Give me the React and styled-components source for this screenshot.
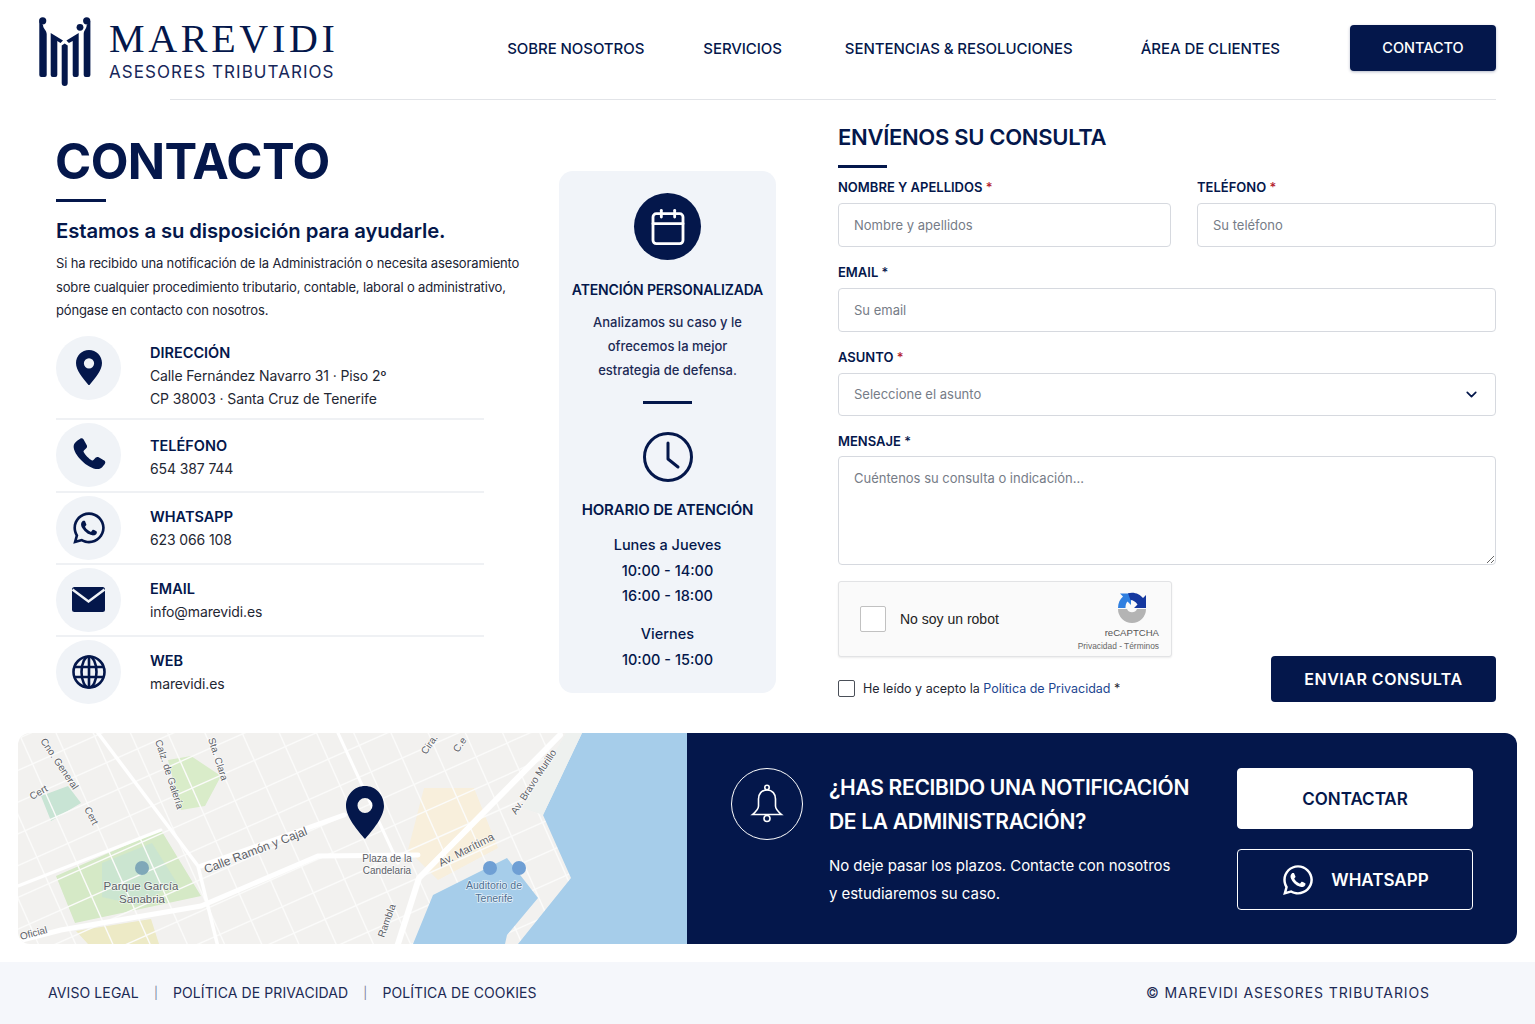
import React from "react";
import styled, { createGlobalStyle } from "styled-components";
import { FaWhatsapp } from "react-icons/fa";
import { Calendar, ChevronDown } from "lucide-react";

const NAVY = "#04174b";
const SANS = `"Inter", "Liberation Sans", sans-serif`;

const Global = createGlobalStyle`
  html, body { margin: 0; padding: 0; background: #fff; }
  body { font-family: ${SANS}; color: #1b2333; }
  * { box-sizing: border-box; }
`;

const Page = styled.div`
  width: 1535px;
  height: 1024px;
  overflow: hidden;
  background: #fff;
`;

const Header = styled.header`
  height: 99px;
  padding: 0 39px 4px 38px;
  display: flex;
  align-items: center;
  justify-content: space-between;
`;
const Logo = styled.div`
  display: flex;
  align-items: center;
  gap: 18px;
  padding-top: 8px;
`;
const LogoText = styled.div`
  display: flex;
  flex-direction: column;
  color: ${NAVY};
`;
const LogoName = styled.span`
  font: 400 40px/38px "Liberation Serif", serif;
  letter-spacing: 3.7px;
  white-space: nowrap;
  margin-bottom: 3px;
`;
const LogoSub = styled.span`
  font: 400 17px/22px ${SANS};
  letter-spacing: 1.05px;
  white-space: nowrap;
  color: #17275a;
`;
const Nav = styled.nav`
  display: flex;
  align-items: center;
`;
const NavLink = styled.a`
  font-size: 15px;
  font-weight: 500;
  color: ${NAVY};
  white-space: nowrap;
  margin-left: ${(p) => p.$gap}px;
  letter-spacing: -0.07px;
  padding-top: 2px;
`;
const NavButton = styled.a`
  margin-left: 70px;
  width: 146px;
  height: 46px;
  background: ${NAVY};
  color: #fff;
  border-radius: 4px;
  font-size: 14.5px;
  font-weight: 500;
  display: flex;
  align-items: center;
  justify-content: center;
  box-shadow: 0 1px 3px rgba(4, 23, 75, 0.3);
`;
const HeaderRule = styled.div`
  height: 1px;
  margin: 0 39px 0 170px;
  background: #e2e4e8;
`;

const Main = styled.main`
  height: 633px;
  padding: 0 39px 0 56px;
  display: flex;
  align-items: flex-start;
`;
const LeftCol = styled.section`
  width: 465px;
  padding-top: 31px;
`;
const Title = styled.h1`
  margin: 0 0 0 -1px;
  font-size: 49px;
  line-height: 62px;
  font-weight: 700;
  color: ${NAVY};
  letter-spacing: -0.6px;
`;
const Bar = styled.div`
  width: ${(p) => p.$w}px;
  height: 3px;
  margin-top: ${(p) => p.$top || 0}px;
  background: ${NAVY};
`;
const Lead = styled.h2`
  margin: 15px 0 0;
  font-size: 20.3px;
  line-height: 28px;
  font-weight: 600;
  color: ${NAVY};
  letter-spacing: -0.1px;
`;
const Intro = styled.p`
  margin: 7px 0 0;
  font-size: 13px;
  line-height: 23.5px;
  color: #1b2333;
  letter-spacing: -0.15px;
  white-space: nowrap;
`;
const ContactList = styled.div`
  margin-top: 10px;
  width: 428px;
`;
const ContactRow = styled.div`
  height: ${(p) => p.$h}px;
  padding-top: 3px;
  display: flex;
  align-items: flex-start;
  gap: 29px;
  border-bottom: ${(p) => (p.$last ? "none" : "2px solid #eff1f4")};
`;
const IconCircle = styled.div`
  width: 65px;
  height: 64px;
  border-radius: 50%;
  background: #f0f3f7;
  color: ${NAVY};
  display: flex;
  align-items: center;
  justify-content: center;
  flex: none;
`;
const Info = styled.div`
  padding-top: ${(p) => p.$top}px;
`;
const InfoLabel = styled.div`
  font-size: 14.5px;
  line-height: 23px;
  font-weight: 600;
  color: ${NAVY};
`;
const InfoText = styled.div`
  font-size: 14px;
  line-height: 23px;
  color: #1f2733;
  letter-spacing: -0.12px;
`;

const Card = styled.aside`
  margin: 71px 0 0 38px;
  width: 217px;
  height: 522px;
  background: #f1f4f9;
  border-radius: 14px;
  display: flex;
  flex-direction: column;
  align-items: center;
  padding-top: 22px;
  text-align: center;
  color: ${NAVY};
`;
const CalendarDisc = styled.div`
  width: 67px;
  height: 67px;
  border-radius: 50%;
  background: ${NAVY};
  color: #fff;
  display: flex;
  align-items: center;
  justify-content: center;
`;
const CardTitle = styled.h3`
  margin: ${(p) => p.$top}px 0 0;
  font-size: ${(p) => p.$size}px;
  line-height: 20px;
  font-weight: 600;
  white-space: nowrap;
  letter-spacing: -0.15px;
`;
const CardText = styled.p`
  margin: 10px 0 0;
  font-size: 13px;
  line-height: 24px;
  font-weight: 500;
  color: #1c2a55;
`;
const CardBar = styled(Bar)`
  margin: 19px 0 28px;
`;
const Hours = styled.div`
  margin-top: ${(p) => p.$top}px;
  font-size: 14.5px;
  line-height: 25.7px;
  font-weight: 500;
`;

const FormCol = styled.form`
  margin-left: 62px;
  width: 658px;
  padding-top: 22px;
`;
const FormTitle = styled.h2`
  margin: 0 0 13px;
  font-size: 22px;
  line-height: 30px;
  font-weight: 600;
  color: ${NAVY};
  letter-spacing: -0.3px;
`;
const FieldRow = styled.div`
  display: grid;
  grid-template-columns: 333px 299px;
  gap: 26px;
  margin-top: 12px;
`;
const Field = styled.div`
  margin-top: ${(p) => p.$top || 0}px;
`;
const Label = styled.label`
  display: block;
  font-size: 13px;
  line-height: 15px;
  font-weight: 600;
  color: ${NAVY};
  margin-bottom: ${(p) => p.$gap || 8}px;
`;
const Req = styled.span`
  color: ${(p) => (p.$red ? "#b3202c" : NAVY)};
  font-weight: 500;
`;
const Input = styled.input`
  display: block;
  width: 100%;
  height: 44px;
  padding: 0 15px;
  border: 1px solid #d6d9df;
  border-radius: 4px;
  background: #fff;
  font: 400 13px ${SANS};
  &::placeholder { color: #767c87; opacity: 1; }
`;
const SelectBox = styled.div`
  height: 43px;
  padding: 0 15px 1px;
  border: 1px solid #d6d9df;
  border-radius: 4px;
  display: flex;
  align-items: center;
  justify-content: space-between;
  font-size: 13px;
  color: #767c87;
`;
const TextArea = styled.textarea`
  display: block;
  width: 100%;
  height: 109px;
  padding: 13px 15px;
  border: 1px solid #d6d9df;
  border-radius: 4px;
  font: 400 13px ${SANS};
  resize: vertical;
  &::placeholder { color: #767c87; opacity: 1; }
`;
const BottomRow = styled.div`
  margin-top: 16px;
  display: flex;
  justify-content: space-between;
`;
const BottomLeft = styled.div`
  padding-bottom: 5px;
`;
const Captcha = styled.div`
  width: 334px;
  height: 76px;
  background: #fafafa;
  border: 1px solid #e2e3e5;
  border-radius: 3px;
  box-shadow: 0 1px 2px rgba(0, 0, 0, 0.08);
  display: flex;
  align-items: center;
  padding: 0 12px 0 21px;
`;
const CaptchaBox = styled.div`
  width: 26px;
  height: 26px;
  border: 1.5px solid #c1c1c1;
  border-radius: 2px;
  background: #fff;
`;
const CaptchaLabel = styled.span`
  margin-left: 14px;
  flex: 1;
  font: 400 14px "Liberation Sans", sans-serif;
  color: #222;
`;
const CaptchaBrand = styled.div`
  display: flex;
  flex-direction: column;
  align-items: flex-end;
  padding-top: 5px;
`;
const CaptchaIcon = styled.div`
  display: flex;
  margin-right: 12px;
`;
const CaptchaName = styled.span`
  margin-top: 3px;
  font: 400 9.6px/12px "Liberation Sans", sans-serif;
  color: #555;
`;
const CaptchaLinks = styled.span`
  margin-top: 1px;
  font: 400 8.4px/12px "Liberation Sans", sans-serif;
  color: #666;
`;
const Consent = styled.div`
  margin-top: 23px;
  display: flex;
  align-items: center;
  gap: 8px;
  font-size: 12.5px;
  line-height: 16px;
  color: #1f2733;
`;
const ConsentBox = styled.span`
  width: 17px;
  height: 17px;
  border: 1.5px solid #4a4f58;
  border-radius: 2px;
`;
const ConsentLink = styled.a`
  color: #1d4690;
`;
const Submit = styled.button`
  align-self: flex-end;
  width: 225px;
  height: 46px;
  border: 0;
  border-radius: 4px;
  background: ${NAVY};
  color: #fff;
  font: 600 16px ${SANS};
  letter-spacing: 0.5px;
`;

const Band = styled.section`
  margin: 0 18px;
  height: 211px;
  display: flex;
`;
const MapPane = styled.div`
  width: 669px;
  height: 211px;
  border-radius: 12px 0 0 12px;
  overflow: hidden;
  flex: none;
`;
const Cta = styled.div`
  flex: 1;
  background: ${NAVY};
  border-radius: 0 12px 12px 0;
  padding: 35px 44px 0;
  display: flex;
  align-items: flex-start;
  color: #fff;
`;
const BellRing = styled.div`
  width: 72px;
  height: 72px;
  border: 1.5px solid #fff;
  border-radius: 50%;
  display: flex;
  align-items: center;
  justify-content: center;
  flex: none;
`;
const CtaBody = styled.div`
  margin-left: 26px;
  flex: 1;
  padding-top: 3px;
`;
const CtaTitle = styled.h2`
  margin: 0;
  font-size: 21px;
  line-height: 34px;
  font-weight: 600;
  letter-spacing: -0.3px;
  white-space: nowrap;
`;
const CtaText = styled.p`
  margin: 13px 0 0;
  font-size: 15px;
  line-height: 28px;
  letter-spacing: -0.05px;
  white-space: nowrap;
`;
const CtaButtons = styled.div`
  width: 236px;
  display: flex;
  flex-direction: column;
  gap: 20px;
  flex: none;
`;
const CtaButton = styled.a`
  height: 61px;
  border-radius: 4px;
  border: 1.5px solid #fff;
  background: ${(p) => (p.$solid ? "#fff" : "transparent")};
  color: ${(p) => (p.$solid ? NAVY : "#fff")};
  font-size: 17px;
  font-weight: 600;
  display: flex;
  align-items: center;
  justify-content: center;
  gap: 16px;
`;

const Footer = styled.footer`
  margin-top: 18px;
  height: 62px;
  background: #f5f7fb;
  padding: 0 105px 2px 48px;
  display: flex;
  align-items: center;
  justify-content: space-between;
  font-size: 14px;
  color: #1c2a55;
`;
const FooterLinks = styled.div`
  display: flex;
  align-items: center;
  letter-spacing: 0.1px;
`;
const FooterSep = styled.span`
  margin: 0 15px;
  color: #7d869c;
  font-size: 12px;
`;
const Copyright = styled.span`
  letter-spacing: 0.9px;
`;

const Pin = ({ size = 40 }) => (
  <svg width={size} height={size * 1.37} viewBox="0 0 38 52">
    <path
      fillRule="evenodd"
      fill={NAVY}
      d="M19 0C8.5 0 0 8.6 0 19c0 11 10 22 19 33 9-11 19-22 19-33C38 8.6 29.5 0 19 0zm0 12a7.5 7.5 0 1 1 0 15 7.5 7.5 0 0 1 0-15z"
    />
  </svg>
);
const Phone = () => (
  <svg width="38" height="38" viewBox="0 0 24 24" fill={NAVY}>
    <path d="M6.6 1.6c.7-.4 1.5-.2 1.9.5l2.1 3.7c.3.6.2 1.3-.2 1.8L8.8 9.2c-.3.3-.3.6-.2.9.9 1.8 3.4 4.4 5.3 5.3.3.1.7.1.9-.2l1.5-1.6c.5-.4 1.2-.5 1.8-.2l3.5 2c.7.4.9 1.3.5 2-.9 1.5-2.4 3.5-4.5 3.5C11 21 2 11.5 2.3 6.5c.1-2.1 2.6-3.9 4.3-4.9z" />
  </svg>
);
const Mail = () => (
  <svg width="33" height="25" viewBox="0 0 33 25">
    <rect width="33" height="25" rx="2.5" fill={NAVY} />
    <path d="M0.5 2.5l16 12 16-12" fill="none" stroke="#f0f3f7" strokeWidth="2.4" />
  </svg>
);
const Globe = () => (
  <svg width="34" height="34" viewBox="0 0 34 34" fill="none" stroke={NAVY} strokeWidth="2.6">
    <circle cx="17" cy="17" r="15.5" />
    <ellipse cx="17" cy="17" rx="7.5" ry="15.5" />
    <path d="M17 1.5v31M2 12h30M2 22h30" />
  </svg>
);
const ClockFace = () => (
  <svg width="50" height="50" viewBox="0 0 50 50" fill="none" stroke={NAVY} strokeWidth="3" strokeLinecap="round" strokeLinejoin="round">
    <circle cx="25" cy="25" r="23.5" />
    <path d="M25 11v16l10 8" />
  </svg>
);
const Bell = () => (
  <svg width="34" height="40" viewBox="0 0 34 40" fill="none" stroke="#fff" strokeWidth="1.6">
    <circle cx="17" cy="3.5" r="2.2" />
    <path d="M17 6c-5.5 0-8.5 4-8.5 9v7c0 3-3 6-6 8.5h29c-3-2.5-6-5.5-6-8.5v-7c0-5-3-9-8.5-9z" />
    <circle cx="17" cy="34.5" r="3" />
  </svg>
);
const Recaptcha = () => (
  <svg width="30" height="32" viewBox="0 0 30 32">
    <path d="M1 17a14 14 0 0 0 28 0h-9a5.5 5.5 0 0 1-10 0z" fill="#b4b4b4" />
    <path d="M1 16C1 11 3 7 6 4.5L3 1.5h11V13l-3.5-3.5C9 11 8.5 13 8.5 16z" fill="#2f7fe0" />
    <path d="M11 1.2C17 -.5 23 2 26 6l3-3v13H17l3.5-3.5C18.5 9.5 16 8 13.5 8z" fill="#15389f" />
  </svg>
);
const LogoMark = () => (
  <svg width="53" height="70" viewBox="0 0 53 70" fill={NAVY}>
    <circle cx="4.7" cy="3.8" r="3.6" />
    <path d="M1.3 4V58a2 2 0 0 0 2 2h3.4a2 2 0 0 0 2-2V17C8.7 13 5 12 5 8z" />
    <path d="M12.7 16L25 23.5 22.5 26 19.3 24V58a2 2 0 0 1-2 2h-2.6a2 2 0 0 1-2-2z" />
    <path d="M23.7 28.5L26.7 26.5 29.7 28.5V66a3 3 0 0 1-6 0z" />
    <path d="M40.7 16L28.4 23.5 30.9 26 34.7 24V58a2 2 0 0 0 2 2h2a2 2 0 0 0 2-2z" />
    <circle cx="42" cy="10.3" r="3.4" />
    <circle cx="48.7" cy="3.8" r="3.6" />
    <path d="M52.4 4V58a2 2 0 0 1-2 2h-2.7a2 2 0 0 1-2-2V17c0-4 3-5 3-9z" />
  </svg>
);

const NW = Array.from({ length: 30 }, (_, i) => -200 + i * 34);
const NE = Array.from({ length: 20 }, (_, i) => -120 + i * 29);

const MapLabel = styled.text`
  font-size: ${(p) => p.$size || 10}px;
  fill: ${(p) => p.$fill || "#5c6066"};
  stroke: rgba(255, 255, 255, 0.7);
  stroke-width: 1.5px;
  paint-order: stroke;
  font-family: "Liberation Sans", sans-serif;
`;

const MapArt = () => (
  <svg width="669" height="211" viewBox="0 0 669 211">
    <defs>
      <filter id="soft" x="-5%" y="-5%" width="110%" height="110%">
        <feGaussianBlur stdDeviation="0.6" />
      </filter>
    </defs>
    <rect width="669" height="211" fill="#f2f1ef" />
    <g filter="url(#soft)">
      <path d="M38 143L143 97 183 163 57 190z" fill="#d5e9c6" />
      <path d="M84 130l50-20 25 40-40 22-35-8z" fill="#cbe5d0" />
      <path d="M150 27l23-4 30 20-16 30-24 4z" fill="#d9ecc9" />
      <path d="M23 63l27-10 13 17-30 18z" fill="#c8e4d4" />
      <path d="M406 55l50 0 24 60-60 32-30-30z" fill="#f8efdc" />
      <path d="M58 198l75-12 8 25H70z" fill="#edeac6" />
      <g stroke="#fbfbfa" strokeWidth="1.4">
        <g transform="rotate(-24 330 105)">
          {NE.map((y) => (
            <line key={y} x1="-300" y1={y} x2="1000" y2={y} />
          ))}
          {NW.map((x) => (
            <line key={x} x1={x} y1="-400" x2={x} y2="600" />
          ))}
        </g>
      </g>
      <g stroke="#fff" fill="none" strokeLinecap="round">
        <path d="M0 153L143 97" strokeWidth="3" />
        <path d="M183 133L326 82" strokeWidth="5" />
        <path d="M0 208L43 197 183 173 300 123 400 122" strokeWidth="5" />
        <path d="M80 0L180 133 200 214" strokeWidth="3.5" />
        <path d="M379 214L401 145 542 2" strokeWidth="6" />
        <path d="M320 0L380 130" strokeWidth="3" />
      </g>
      <path d="M564 0L525 82 553 145 500 211H669V0z" fill="#a6cdea" />
      <path d="M415 162L489 125 520 165 489 202 487 211H395z" fill="#a6cdea" />
      <path d="M564 0H548L505 75 525 82z" fill="#eef1ef" />
    </g>
    <circle cx="124" cy="135" r="7" fill="#7fa8b8" />
    <circle cx="472" cy="135" r="7" fill="#6f9fd4" />
    <circle cx="501" cy="135" r="7" fill="#6f9fd4" />
    <MapLabel $size={12} transform="translate(239 121) rotate(-21)" textAnchor="middle">Calle Ramón y Cajal</MapLabel>
    <MapLabel $size={11} transform="translate(450 120) rotate(-27)" textAnchor="middle">Av. Marítima</MapLabel>
    <MapLabel x="369" y="129" textAnchor="middle">Plaza de la</MapLabel>
    <MapLabel x="369" y="141" textAnchor="middle">Candelaria</MapLabel>
    <MapLabel $size={11.5} x="123" y="157" textAnchor="middle">Parque García</MapLabel>
    <MapLabel $size={11.5} x="124" y="170" textAnchor="middle">Sanabria</MapLabel>
    <MapLabel transform="translate(22 8) rotate(56)">Cno. General</MapLabel>
    <MapLabel transform="translate(137 8) rotate(72)">Calz. de Galería</MapLabel>
    <MapLabel transform="translate(190 6) rotate(72)">Sta. Clara</MapLabel>
    <MapLabel transform="translate(14 67) rotate(-30)">Cert</MapLabel>
    <MapLabel transform="translate(66 76) rotate(62)">Cert</MapLabel>
    <MapLabel transform="translate(408 22) rotate(-55)">Cira.</MapLabel>
    <MapLabel transform="translate(440 20) rotate(-55)">C.e</MapLabel>
    <MapLabel transform="translate(366 205) rotate(-70)">Rambla</MapLabel>
    <MapLabel transform="translate(498 82) rotate(-57)">Av. Bravo Murillo</MapLabel>
    <MapLabel transform="translate(3 207) rotate(-15)">Oficial</MapLabel>
    <MapLabel $size={10.5} $fill="#4d6f93" x="476" y="156" textAnchor="middle">Auditorio de</MapLabel>
    <MapLabel $size={10.5} $fill="#4d6f93" x="476" y="169" textAnchor="middle">Tenerife</MapLabel>
    <g transform="translate(328 53)">
      <path
        fillRule="evenodd"
        fill={NAVY}
        d="M19 0C8.5 0 0 8.6 0 20c0 11 12 25 19 33 7-8 19-22 19-33C38 8.6 29.5 0 19 0zm0 12a7.5 7.5 0 1 1 0 15 7.5 7.5 0 0 1 0-15z"
      />
    </g>
  </svg>
);

export default function App() {
  return (
    <Page>
      <Global />
      <Header>
        <Logo>
          <LogoMark />
          <LogoText>
            <LogoName>MAREVIDI</LogoName>
            <LogoSub>ASESORES TRIBUTARIOS</LogoSub>
          </LogoText>
        </Logo>
        <Nav>
          <NavLink $gap={0}>SOBRE NOSOTROS</NavLink>
          <NavLink $gap={59}>SERVICIOS</NavLink>
          <NavLink $gap={63}>SENTENCIAS &amp; RESOLUCIONES</NavLink>
          <NavLink $gap={68}>ÁREA DE CLIENTES</NavLink>
          <NavButton>CONTACTO</NavButton>
        </Nav>
      </Header>
      <HeaderRule />
      <Main>
        <LeftCol>
          <Title>CONTACTO</Title>
          <Bar $w={50} $top={6} />
          <Lead>Estamos a su disposición para ayudarle.</Lead>
          <Intro>
            Si ha recibido una notificación de la Administración o necesita asesoramiento
            <br />
            sobre cualquier procedimiento tributario, contable, laboral o administrativo,
            <br />
            póngase en contacto con nosotros.
          </Intro>
          <ContactList>
            <ContactRow $h={87}>
              <IconCircle><Pin size={26} /></IconCircle>
              <Info $top={5}>
                <InfoLabel>DIRECCIÓN</InfoLabel>
                <InfoText>Calle Fernández Navarro 31 · Piso 2º</InfoText>
                <InfoText>CP 38003 · Santa Cruz de Tenerife</InfoText>
              </Info>
            </ContactRow>
            <ContactRow $h={73}>
              <IconCircle><Phone /></IconCircle>
              <Info $top={11}>
                <InfoLabel>TELÉFONO</InfoLabel>
                <InfoText>654 387 744</InfoText>
              </Info>
            </ContactRow>
            <ContactRow $h={72}>
              <IconCircle><FaWhatsapp size={36} /></IconCircle>
              <Info $top={9}>
                <InfoLabel>WHATSAPP</InfoLabel>
                <InfoText>623 066 108</InfoText>
              </Info>
            </ContactRow>
            <ContactRow $h={72}>
              <IconCircle><Mail /></IconCircle>
              <Info $top={9}>
                <InfoLabel>EMAIL</InfoLabel>
                <InfoText>info@marevidi.es</InfoText>
              </Info>
            </ContactRow>
            <ContactRow $h={72} $last>
              <IconCircle><Globe /></IconCircle>
              <Info $top={9}>
                <InfoLabel>WEB</InfoLabel>
                <InfoText>marevidi.es</InfoText>
              </Info>
            </ContactRow>
          </ContactList>
        </LeftCol>

        <Card>
          <CalendarDisc><Calendar size={40} strokeWidth={1.7} /></CalendarDisc>
          <CardTitle $top={20} $size={14}>ATENCIÓN PERSONALIZADA</CardTitle>
          <CardText>
            Analizamos su caso y le
            <br />
            ofrecemos la mejor
            <br />
            estrategia de defensa.
          </CardText>
          <CardBar $w={49} />
          <ClockFace />
          <CardTitle $top={18} $size={15}>HORARIO DE ATENCIÓN</CardTitle>
          <Hours $top={12}>
            Lunes a Jueves
            <br />
            10:00 - 14:00
            <br />
            16:00 - 18:00
          </Hours>
          <Hours $top={12}>
            Viernes
            <br />
            10:00 - 15:00
          </Hours>
        </Card>

        <FormCol>
          <FormTitle>ENVÍENOS SU CONSULTA</FormTitle>
          <Bar $w={49} />
          <FieldRow>
            <Field>
              <Label>NOMBRE Y APELLIDOS <Req $red>*</Req></Label>
              <Input placeholder="Nombre y apellidos" />
            </Field>
            <Field>
              <Label>TELÉFONO <Req $red>*</Req></Label>
              <Input placeholder="Su teléfono" />
            </Field>
          </FieldRow>
          <Field $top={18}>
            <Label>EMAIL <Req>*</Req></Label>
            <Input placeholder="Su email" />
          </Field>
          <Field $top={18}>
            <Label>ASUNTO <Req $red>*</Req></Label>
            <SelectBox>
              Seleccione el asunto
              <ChevronDown size={17} color={NAVY} strokeWidth={2.4} />
            </SelectBox>
          </Field>
          <Field $top={18}>
            <Label $gap={7}>MENSAJE <Req>*</Req></Label>
            <TextArea placeholder="Cuéntenos su consulta o indicación..." />
          </Field>
          <BottomRow>
            <BottomLeft>
              <Captcha>
                <CaptchaBox />
                <CaptchaLabel>No soy un robot</CaptchaLabel>
                <CaptchaBrand>
                  <CaptchaIcon><Recaptcha /></CaptchaIcon>
                  <CaptchaName>reCAPTCHA</CaptchaName>
                  <CaptchaLinks>Privacidad - Términos</CaptchaLinks>
                </CaptchaBrand>
              </Captcha>
              <Consent>
                <ConsentBox />
                <span>
                  He leído y acepto la <ConsentLink>Política de Privacidad</ConsentLink> *
                </span>
              </Consent>
            </BottomLeft>
            <Submit type="button">ENVIAR CONSULTA</Submit>
          </BottomRow>
        </FormCol>
      </Main>

      <Band>
        <MapPane><MapArt /></MapPane>
        <Cta>
          <BellRing><Bell /></BellRing>
          <CtaBody>
            <CtaTitle>
              ¿HAS RECIBIDO UNA NOTIFICACIÓN
              <br />
              DE LA ADMINISTRACIÓN?
            </CtaTitle>
            <CtaText>
              No deje pasar los plazos. Contacte con nosotros
              <br />
              y estudiaremos su caso.
            </CtaText>
          </CtaBody>
          <CtaButtons>
            <CtaButton $solid>CONTACTAR</CtaButton>
            <CtaButton><FaWhatsapp size={34} />WHATSAPP</CtaButton>
          </CtaButtons>
        </Cta>
      </Band>

      <Footer>
        <FooterLinks>
          AVISO LEGAL
          <FooterSep>|</FooterSep>
          POLÍTICA DE PRIVACIDAD
          <FooterSep>|</FooterSep>
          POLÍTICA DE COOKIES
        </FooterLinks>
        <Copyright>© MAREVIDI ASESORES TRIBUTARIOS</Copyright>
      </Footer>
    </Page>
  );
}
